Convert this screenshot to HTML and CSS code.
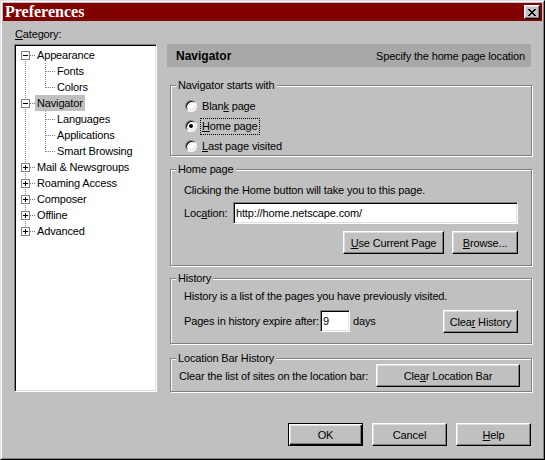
FILE: index.html
```html
<!DOCTYPE html>
<html>
<head>
<meta charset="utf-8">
<title>Preferences</title>
<link rel="stylesheet" href="styles.css">
</head>
<body>
<div class="window">
  <div class="frame">
    <div class="titlebar">
      <span class="title">Preferences</span>
      <button class="close" aria-label="Close">
        <svg width="8" height="7" viewBox="0 0 8 7" shape-rendering="crispEdges"><path d="M0 0h2v1H0zM6 0h2v1H6zM1 1h2v1H1zM5 1h2v1H5zM2 2h4v1H2zM3 3h2v1H3zM2 4h4v1H2zM1 5h2v1H1zM5 5h2v1H5zM0 6h2v1H0zM6 6h2v1H6z" fill="#000"/></svg>
      </button>
    </div>

    <div class="main">
      <div class="left">
        <div class="cat-label"><u>C</u>ategory:</div>
        <div class="tree">
          <div class="row"><span class="c1 first"><svg class="tog" width="9" height="9" viewBox="0 0 9 9" shape-rendering="crispEdges"><rect x="0.5" y="0.5" width="8" height="8" fill="#fff" stroke="#808080"/><path d="M2 4.5h5" stroke="#000"/></svg></span><span class="lbl">Appearance</span></div>
          <div class="row"><span class="c1 pass"></span><span class="c2 mid"></span><span class="lbl">Fonts</span></div>
          <div class="row"><span class="c1 pass"></span><span class="c2 last"></span><span class="lbl">Colors</span></div>
          <div class="row"><span class="c1 mid"><svg class="tog" width="9" height="9" viewBox="0 0 9 9" shape-rendering="crispEdges"><rect x="0.5" y="0.5" width="8" height="8" fill="#fff" stroke="#808080"/><path d="M2 4.5h5" stroke="#000"/></svg></span><span class="lbl sel">Navigator</span></div>
          <div class="row"><span class="c1 pass"></span><span class="c2 mid"></span><span class="lbl">Languages</span></div>
          <div class="row"><span class="c1 pass"></span><span class="c2 mid"></span><span class="lbl">Applications</span></div>
          <div class="row"><span class="c1 pass"></span><span class="c2 last"></span><span class="lbl">Smart Browsing</span></div>
          <div class="row"><span class="c1 mid"><svg class="tog" width="9" height="9" viewBox="0 0 9 9" shape-rendering="crispEdges"><rect x="0.5" y="0.5" width="8" height="8" fill="#fff" stroke="#808080"/><path d="M2 4.5h5M4.5 2v5" stroke="#000"/></svg></span><span class="lbl">Mail &amp; Newsgroups</span></div>
          <div class="row"><span class="c1 mid"><svg class="tog" width="9" height="9" viewBox="0 0 9 9" shape-rendering="crispEdges"><rect x="0.5" y="0.5" width="8" height="8" fill="#fff" stroke="#808080"/><path d="M2 4.5h5M4.5 2v5" stroke="#000"/></svg></span><span class="lbl">Roaming Access</span></div>
          <div class="row"><span class="c1 mid"><svg class="tog" width="9" height="9" viewBox="0 0 9 9" shape-rendering="crispEdges"><rect x="0.5" y="0.5" width="8" height="8" fill="#fff" stroke="#808080"/><path d="M2 4.5h5M4.5 2v5" stroke="#000"/></svg></span><span class="lbl">Composer</span></div>
          <div class="row"><span class="c1 mid"><svg class="tog" width="9" height="9" viewBox="0 0 9 9" shape-rendering="crispEdges"><rect x="0.5" y="0.5" width="8" height="8" fill="#fff" stroke="#808080"/><path d="M2 4.5h5M4.5 2v5" stroke="#000"/></svg></span><span class="lbl">Offline</span></div>
          <div class="row"><span class="c1 last"><svg class="tog" width="9" height="9" viewBox="0 0 9 9" shape-rendering="crispEdges"><rect x="0.5" y="0.5" width="8" height="8" fill="#fff" stroke="#808080"/><path d="M2 4.5h5M4.5 2v5" stroke="#000"/></svg></span><span class="lbl">Advanced</span></div>
        </div>
      </div>

      <div class="right">
        <div class="header"><b>Navigator</b><span>Specify the home page location</span></div>

        <div class="group g1">
          <div class="legend">Navigator starts with</div>
          <div class="radios">
            <div class="radio-row"><span class="radio"></span><span class="rlabel">Blan<u>k</u> page</span></div>
            <div class="radio-row"><span class="radio checked"></span><span class="rlabel focus"><u>H</u>ome page</span></div>
            <div class="radio-row"><span class="radio"></span><span class="rlabel"><u>L</u>ast page visited</span></div>
          </div>
        </div>

        <div class="group g2">
          <div class="legend">Home page</div>
          <div class="text">Clicking the Home button will take you to this page.</div>
          <div class="loc-row">
            <span class="loc-label">Loc<u>a</u>tion:</span>
            <input class="field loc-field" type="text" value="http://home.netscape.com/">
          </div>
          <div class="btn-row">
            <button class="btn w-use"><u>U</u>se Current Page</button>
            <button class="btn w-browse"><u>B</u>rowse...</button>
          </div>
        </div>

        <div class="group g3">
          <div class="legend">History</div>
          <div class="text">History is a list of the pages you have previously visited.</div>
          <div class="hist-row">
            <span class="exp-label">Pages in history expire after:</span>
            <input class="field days-field" type="text" value="9">
            <span class="days">days</span>
            <button class="btn w-clear">Clea<u>r</u> History</button>
          </div>
        </div>

        <div class="group g4">
          <div class="legend">Location Bar History</div>
          <div class="lb-row">
            <span>Clear the list of sites on the location bar:</span>
            <button class="btn w-clearlb">Cle<u>a</u>r Location Bar</button>
          </div>
        </div>
      </div>
    </div>

    <div class="footer">
      <button class="btn default w-foot">OK</button>
      <button class="btn w-foot">Cancel</button>
      <button class="btn w-foot"><u>H</u>elp</button>
    </div>
  </div>
</div>
</body>
</html>
```
FILE: styles.css
```css
* { box-sizing: border-box; }
html, body { margin: 0; padding: 0; }
body {
  background: #c0c0c0;
  font-family: "Liberation Sans", Arial, sans-serif;
  font-size: 11px;
  letter-spacing: -0.15px;
  color: #000;
  --vd: repeating-linear-gradient(to bottom, #808080 0 1px, transparent 1px 2px);
  --hd: repeating-linear-gradient(to right, #808080 0 1px, transparent 1px 2px);
}
u { text-decoration: underline; text-underline-offset: 1px; }

.window {
  width: 545px;
  height: 460px;
  background: #c0c0c0;
  border: 1px solid;
  border-color: #dfdfdf #000 #000 #dfdfdf;
}
.frame {
  height: 100%;
  border: 1px solid;
  border-color: #fff #808080 #808080 #fff;
  padding: 1px;
  display: flex;
  flex-direction: column;
}

.titlebar {
  height: 18px;
  flex: none;
  background: #800000;
  display: flex;
  align-items: center;
  justify-content: space-between;
  padding: 0 2px;
}
.title {
  font-family: "Liberation Serif", "Times New Roman", serif;
  font-weight: bold;
  font-size: 16px;
  letter-spacing: 0;
  line-height: 18px;
  color: #fff;
}
.close {
  appearance: none;
  margin: 0;
  padding: 0;
  width: 16px;
  height: 14px;
  background: #c0c0c0;
  border: 1px solid;
  border-color: #fff #000 #000 #fff;
  box-shadow: inset -1px -1px 0 #808080, inset 1px 1px 0 #dfdfdf;
  display: flex;
  align-items: center;
  justify-content: center;
}
.close svg { display: block; margin-left: -1px; }

/* main area */
.main {
  display: flex;
  align-items: flex-start;
  padding-left: 11px;
  gap: 10px;
}
.left { width: 143px; flex: none; padding-top: 7px; }
.cat-label { height: 13px; line-height: 13px; margin-left: 1px; }

.tree {
  margin-top: 3px;
  height: 348px;
  background: #fff;
  border: 1px solid;
  border-color: #808080 #fff #fff #808080;
  box-shadow: inset 1px 1px 0 #000, inset -1px -1px 0 #dfdfdf;
  padding: 2px 1px 0;
}
.row { display: flex; height: 16px; line-height: 16px; white-space: nowrap; }
.c1 { width: 19px; flex: none; }
.c2 { width: 20px; flex: none; }
.tog { display: block; margin: 4px 0 0 5px; }
.lbl { padding: 0 2px; }
.lbl.sel { background: #c0c0c0; }

.c1.first {
  background: var(--vd) 9px 8px / 1px 8px no-repeat,
              var(--hd) 10px 8px / 9px 1px no-repeat;
}
.c1.mid {
  background: var(--vd) 9px 0 / 1px 16px no-repeat,
              var(--hd) 10px 8px / 9px 1px no-repeat;
}
.c1.last {
  background: var(--vd) 9px 0 / 1px 9px no-repeat,
              var(--hd) 10px 8px / 9px 1px no-repeat;
}
.c1.pass {
  background: var(--vd) 9px 0 / 1px 16px no-repeat;
}
.c2.mid {
  background: var(--vd) 10px 0 / 1px 16px no-repeat,
              var(--hd) 11px 8px / 9px 1px no-repeat;
}
.c2.last {
  background: var(--vd) 10px 0 / 1px 9px no-repeat,
              var(--hd) 11px 8px / 9px 1px no-repeat;
}

/* right column */
.right { width: 365px; flex: none; margin-top: 23px; }
.header {
  width: 364px;
  height: 23px;
  background: #a8a8a8;
  display: flex;
  align-items: center;
  justify-content: space-between;
  padding: 0 6px 0 9px;
}
.header b { font-size: 12px; letter-spacing: 0; }

.group {
  margin-left: 3px;
  width: 362px;
  border: 1px solid #808080;
  box-shadow: inset 1px 1px 0 #fff, 1px 1px 0 #fff;
}
.legend {
  width: max-content;
  margin: -7px 0 0 5px;
  padding: 0 2px;
  line-height: 13px;
  background: #c0c0c0;
}
.g1 { margin-top: 18px; height: 71px; }
.g2 { margin-top: 13px; height: 97px; }
.g3 { margin-top: 12px; height: 66px; }
.g4 { margin-top: 14px; height: 34px; }

.radios { margin-top: 4px; }
.radio-row { display: flex; align-items: center; height: 20px; padding-left: 14px; }
.radio {
  flex: none;
  width: 12px;
  height: 12px;
  border-radius: 50%;
  background: #fff;
  border: 1px solid;
  border-color: #808080 #fff #fff #808080;
  box-shadow: inset 1px 1px 0 #000, inset -1px -1px 0 #dfdfdf;
  display: flex;
  align-items: center;
  justify-content: center;
}
.radio.checked::after {
  content: "";
  width: 4px;
  height: 4px;
  border-radius: 50%;
  background: #000;
}
.rlabel { margin-left: 4px; padding: 0 1px; line-height: 15px; }
.rlabel.focus { outline: 1px dotted #000; }

.text { line-height: 13px; padding-left: 13px; }
.g2 .text { margin-top: 8px; }
.g3 .text { margin-top: 5px; }

.loc-row { display: flex; align-items: center; height: 22px; margin-top: 5px; padding: 0 13px; }
.loc-label { width: 49px; flex: none; }
.field {
  font: inherit;
  letter-spacing: inherit;
  color: #000;
  margin: 0;
  height: 22px;
  padding: 0 2px;
  background: #fff;
  border: 1px solid;
  border-color: #808080 #fff #fff #808080;
  box-shadow: inset 1px 1px 0 #000, inset -1px -1px 0 #dfdfdf;
  outline: none;
}
.loc-field { flex: 1; min-width: 0; }

.btn-row { display: flex; justify-content: flex-end; gap: 8px; margin-top: 7px; padding-right: 13px; }

.btn {
  appearance: none;
  font: inherit;
  letter-spacing: inherit;
  color: #000;
  margin: 0;
  padding: 0;
  height: 23px;
  flex: none;
  background: #c0c0c0;
  border: 1px solid;
  border-color: #fff #000 #000 #fff;
  box-shadow: inset -1px -1px 0 #808080, inset 1px 1px 0 #dfdfdf;
}
.btn.default {
  border-color: #000;
  box-shadow: inset 1px 1px 0 #fff, inset -1px -1px 0 #000, inset -2px -2px 0 #808080, inset 2px 2px 0 #dfdfdf;
}
.w-use { width: 101px; }
.w-browse { width: 66px; }
.w-clear { width: 75px; margin-left: auto; }
.w-clearlb { width: 144px; margin-left: auto; }
.w-foot { width: 75px; }

.hist-row { display: flex; align-items: flex-start; height: 23px; margin-top: 7px; padding: 0 13px; line-height: 22px; }
.exp-label { width: 136px; flex: none; }
.days-field { width: 30px; flex: none; }
.days { margin-left: 3px; }

.lb-row { display: flex; align-items: center; height: 23px; margin-top: -1px; padding: 0 11px 0 8px; }

.footer {
  display: flex;
  justify-content: flex-end;
  gap: 9px;
  margin-top: 31px;
  padding-right: 11px;
}
```
